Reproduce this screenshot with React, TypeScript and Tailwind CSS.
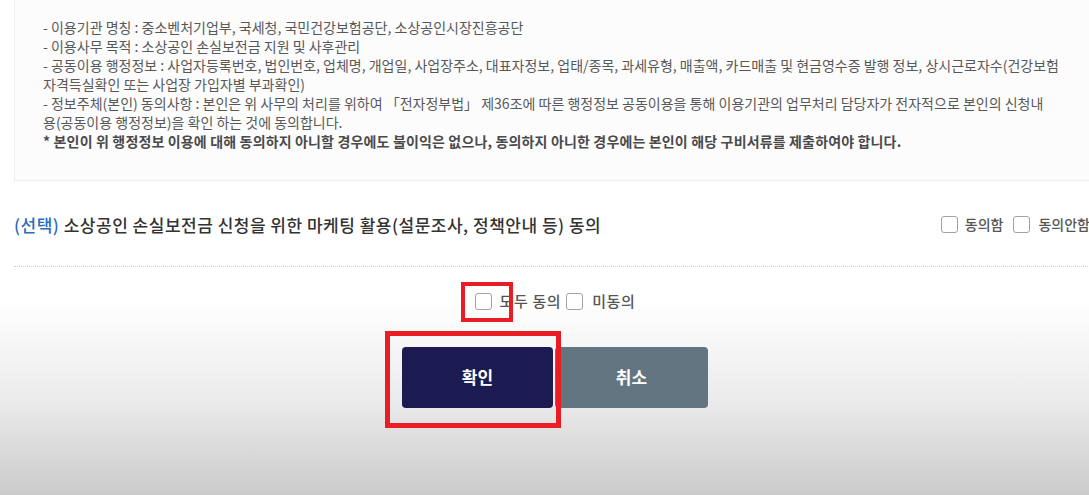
const lines = [
  "- 이용기관 명칭 : 중소벤처기업부, 국세청, 국민건강보험공단, 소상공인시장진흥공단",
  "- 이용사무 목적 : 소상공인 손실보전금 지원 및 사후관리",
  "- 공동이용 행정정보 : 사업자등록번호, 법인번호, 업체명, 개업일, 사업장주소, 대표자정보, 업태/종목, 과세유형, 매출액, 카드매출 및 현금영수증 발행 정보, 상시근로자수(건강보험",
  "자격득실확인 또는 사업장 가입자별 부과확인)",
  "- 정보주체(본인) 동의사항 : 본인은 위 사무의 처리를 위하여 「전자정부법」 제36조에 따른 행정정보 공동이용을 통해 이용기관의 업무처리 담당자가 전자적으로 본인의 신청내",
  "용(공동이용 행정정보)을 확인 하는 것에 동의합니다.",
];

function Box() {
  return <span className="inline-block h-[17px] w-[17px] shrink-0 rounded-[3px] border border-[#a3a3a3] bg-white" />;
}

export default function App() {
  return (
    <div className="relative h-[495px] w-full overflow-hidden bg-[linear-gradient(to_bottom,#ffffff_0px,#ffffff_300px,#ebebeb_400px,#cbcbcb_495px)] font-['Noto_Sans_CJK_KR',sans-serif]">
      <div className="ml-[14px] w-[1082px]">
        {/* 공동이용 안내 박스 */}
        <div className="h-[181px] border border-t-0 border-[#efefef] bg-[#fcfcfc] pl-[28px] pt-[18px] text-[14px] leading-[19px] tracking-[0px] text-[#585858]">
          {lines.map((l) => (
            <div key={l} className="whitespace-nowrap">{l}</div>
          ))}
          <div className="whitespace-nowrap font-bold tracking-[0.15px] text-[#4a4a4a]">
            * 본인이 위 행정정보 이용에 대해 동의하지 아니할 경우에도 불이익은 없으나, 동의하지 아니한 경우에는 본인이 해당 구비서류를 제출하여야 합니다.
          </div>
        </div>

        {/* 마케팅 동의 */}
        <div className="flex h-[86px] items-center justify-between border-b border-dotted border-[#cfcfcf] pt-[2px]">
          <div className="whitespace-nowrap text-[17px] font-medium tracking-[0.5px] text-[#333]">
            <span className="text-[#2e6cbe]">(선택)</span> 소상공인 손실보전금 신청을 위한 마케팅 활용(설문조사, 정책안내 등) 동의
          </div>
          <div className="mr-[6px] flex items-center whitespace-nowrap text-[14px] font-medium text-[#555]">
            <Box />
            <span className="ml-[7px] mr-[10px]">동의함</span>
            <Box />
            <span className="ml-[8px]">동의안함</span>
          </div>
        </div>

        {/* 전체 동의 */}
        <div className="mt-[23px] flex items-center justify-center text-[15px] font-medium tracking-[0.6px] text-[#555]">
          <Box />
          <span className="ml-[8px] mr-[5px]">모두 동의</span>
          <Box />
          <span className="ml-[9px]">미동의</span>
        </div>

        <div className="mt-[34px] flex justify-center gap-[2px]">
          <button className="h-[61px] w-[151px] rounded-[4px] bg-[#1b1b52] text-[17px] font-bold text-white">확인</button>
          <button className="h-[61px] w-[153px] rounded-[4px] bg-[#627580] text-[17px] font-bold text-white">취소</button>
        </div>
      </div>

      {/* 강조 표시 */}
      <div className="absolute left-[461px] top-[282px] h-[40px] w-[52px] border-[4px] border-[#ea1d25]" />
      <div className="absolute left-[385px] top-[331px] h-[97px] w-[176px] border-[5px] border-[#ea1d25]" />
    </div>
  );
}
